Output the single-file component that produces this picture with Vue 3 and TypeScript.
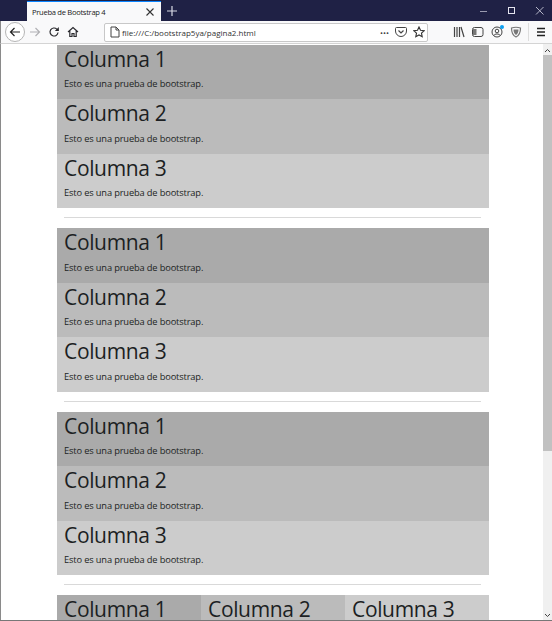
<script setup lang="ts">
interface Block {
  id: number
  layout: 'stack' | 'row'
}

const blocks: Block[] = [
  { id: 1, layout: 'stack' },
  { id: 2, layout: 'stack' },
  { id: 3, layout: 'stack' },
  { id: 4, layout: 'row' },
]
const columns = [1, 2, 3]
</script>

<template>
  <div class="window">
    <div class="tabbar">
      <div class="tab">
        <span class="tab-title">Prueba de Bootstrap 4</span>
        <svg class="tab-close" width="10" height="10" viewBox="0 0 10 10">
          <path d="M1.5 1.5l7 7M8.5 1.5l-7 7" stroke="#333" stroke-width="1.1" fill="none" />
        </svg>
      </div>
      <svg class="new-tab" width="12" height="12" viewBox="0 0 12 12">
        <path d="M6 1v10M1 6h10" stroke="#d8d9e4" stroke-width="1.2" fill="none" />
      </svg>
      <div class="win-controls">
        <svg width="10" height="10" viewBox="0 0 10 10"><path d="M1 5.5h7" stroke="#9a9bb0" fill="none" /></svg>
        <svg width="10" height="10" viewBox="0 0 10 10"><rect x="1.5" y="1.5" width="6" height="6" stroke="#e4e4ee" fill="none" /></svg>
        <svg width="10" height="10" viewBox="0 0 10 10"><path d="M1 1l7.5 7.5M8.500 1L1 8.500" stroke="#b5b6c8" fill="none" /></svg>
      </div>
    </div>

    <div class="navbar">
      <div class="back">
        <svg width="12" height="12" viewBox="0 0 12 12">
          <path d="M11 6H1.500M5.500 2L1.500 6l4 4" stroke="#222" stroke-width="1.200" fill="none" />
        </svg>
      </div>
      <svg class="nav-icon" width="12" height="12" viewBox="0 0 12 12">
        <path d="M11 6H1.500M5.500 2L1.500 6l4 4" transform="matrix(-1 0 0 1 12 0)" stroke="#b0b0b4" stroke-width="1.200" fill="none" />
      </svg>
      <svg class="nav-icon" width="12" height="12" viewBox="0 0 12 12">
        <path d="M10 6.500a4 4 0 1 1-1.200-3.400L10.500 4.500" stroke="#2a2a2e" stroke-width="1.200" fill="none" />
        <path d="M10.800 1v4h-4z" fill="#2a2a2e" />
      </svg>
      <svg class="nav-icon" width="12" height="12" viewBox="0 0 12 12">
        <path d="M1 6l5-4.500L11 6M2.800 5v5.500h2.200V7.500h2v3h2.200V5" stroke="#2a2a2e" stroke-width="1.200" fill="none" />
      </svg>

      <div class="urlbar">
        <svg class="doc" width="10" height="12" viewBox="0 0 10 12">
          <path d="M1 1h5l3 3v7H1zM6 1v3h3" stroke="#444" fill="none" />
        </svg>
        <span class="url">file:///C:/bootstrap5ya/pagina2.html</span>
        <span class="dots">•••</span>
        <svg class="pocket" width="12" height="12" viewBox="0 0 12 12">
          <path d="M1.500 1.500h9a1 1 0 0 1 1 1V5a5.500 5.500 0 0 1-11 0V2.500a1 1 0 0 1 1-1z" stroke="#444" fill="none" />
          <path d="M3.500 4.500L6 7l2.500-2.500" stroke="#444" stroke-width="1.200" fill="none" />
        </svg>
        <svg width="12" height="12" viewBox="0 0 12 12">
          <path d="M6 1l1.500 3.300 3.700.4-2.700 2.500.7 3.600L6 9l-3.200 1.800.7-3.600L.8 4.700l3.700-.4z" stroke="#333" stroke-width="1.100" fill="none" />
        </svg>
      </div>

      <div class="tools">
        <svg class="library" width="14" height="12" viewBox="0 0 14 12">
          <path d="M1.500 1v10M4 1v10M6.500 1v10M8 1l3 10" stroke="#444" stroke-width="1.200" fill="none" />
        </svg>
        <svg width="12" height="12" viewBox="0 0 12 12">
          <rect x=".5" y="1.500" width="10.500" height="9" rx="2" stroke="#444" fill="none" />
          <path d="M1 3h3.500v6H1z" fill="#777" />
        </svg>
        <span class="account">
          <svg width="12" height="12" viewBox="0 0 12 12">
            <circle cx="6" cy="6" r="5" stroke="#444" fill="none" />
            <circle cx="6" cy="5" r="1.800" stroke="#444" fill="none" />
            <path d="M2.800 9.500c1-2 5.400-2 6.400 0" stroke="#444" fill="none" />
          </svg>
          <i class="badge"></i>
        </span>
        <svg width="12" height="12" viewBox="0 0 12 12">
          <path d="M1.500 2c3-1 6-1 9 0 0 4-1 7.500-4.500 9C2.500 9.500 1.500 6 1.500 2z" stroke="#777" stroke-width="1.200" fill="none" />
          <path d="M3.500 3.500h5c0 2.500-.8 4.500-2.500 5.500-1.700-1-2.500-3-2.500-5.500z" fill="#777" />
        </svg>
        <i class="divider"></i>
        <svg class="menu" width="8" height="12" viewBox="0 0 8 12">
          <path d="M0 2.500h8M0 6h8M0 9.500h8" stroke="#222" stroke-width="1.300" fill="none" />
        </svg>
      </div>
    </div>

    <div class="viewport">
      <main class="page">
        <template v-for="(block, i) in blocks" :key="block.id">
          <hr v-if="i > 0" />
          <section class="block" :class="block.layout">
            <div v-for="n in columns" :key="n" class="col" :class="`shade-${n}`">
              <h1>Columna {{ n }}</h1>
              <p v-if="block.layout === 'stack'">Esto es una prueba de bootstrap.</p>
            </div>
          </section>
        </template>
      </main>
      <div class="scrollbar">
        <svg width="7" height="5" viewBox="0 0 7 5"><path d="M1 4l2.500-2.500L6 4" stroke="#444" fill="none" /></svg>
        <div class="thumb"></div>
        <svg width="7" height="5" viewBox="0 0 7 5"><path d="M1 1l2.500 2.500L6 1" stroke="#444" fill="none" /></svg>
      </div>
    </div>
  </div>
</template>

<style>
html,
body {
  margin: 0;
  overflow: hidden;
}
</style>

<style scoped>
.window {
  width: 552px;
  height: 621px;
  box-sizing: border-box;
  display: flex;
  flex-direction: column;
  overflow: hidden;
  background: #fff;
  border-bottom: 1px solid #777;
  font-family: "Open Sans", "Liberation Sans", sans-serif;
  color: #1c1f23;
}

.tabbar {
  height: 21px;
  flex: none;
  display: flex;
  align-items: center;
  padding-left: 27px;
  background: #1f2145;
}

.tab {
  width: 134px;
  height: 20px;
  margin-top: 1px;
  padding: 0 6px 0 5px;
  box-sizing: border-box;
  display: flex;
  align-items: center;
  justify-content: space-between;
  background: #f9f9fa;
  border-top: 1px solid #0a84ff;
}

.tab-title {
  font-size: 7.600px;
  letter-spacing: -0.3px;
  color: #222;
}

.new-tab {
  margin-left: 5px;
}

.win-controls {
  margin-left: auto;
  width: 73px;
  padding-right: 7px;
  box-sizing: border-box;
  display: flex;
  justify-content: space-between;
}

.navbar {
  height: 23px;
  flex: none;
  display: flex;
  align-items: center;
  padding-left: 4px;
  box-sizing: border-box;
  background: #f9f9fa;
  border-left: 1px solid #8a8a8a;
  border-bottom: 1px solid #d4d4d4;
}

.back {
  width: 20px;
  height: 20px;
  box-sizing: border-box;
  display: flex;
  align-items: center;
  justify-content: center;
  border: 1px solid #b5b5b5;
  border-radius: 50%;
  background: #fff;
  margin-right: 4px;
}

.nav-icon {
  margin-right: 7px;
}

.urlbar {
  width: 324px;
  height: 19px;
  margin-left: 18px;
  padding: 0 2px 0 5px;
  box-sizing: border-box;
  display: flex;
  align-items: center;
  background: #fff;
  border: 1px solid #c8c8c8;
  border-radius: 2px;
}

.doc {
  margin-right: 2px;
}

.url {
  flex: 1;
  font-size: 8px;
  color: #333;
}

.dots {
  margin-right: 6px;
  font-size: 8px;
  color: #444;
}

.pocket {
  margin-right: 6px;
}

.tools {
  display: flex;
  align-items: center;
  gap: 7px;
  margin-left: 25px;
}

.library {
  margin-right: -2px;
}

.account {
  position: relative;
  display: flex;
}

.badge {
  position: absolute;
  top: -1px;
  right: -1px;
  width: 4px;
  height: 4px;
  border-radius: 50%;
  background: #0a9ff0;
}

.divider {
  width: 1px;
  height: 18px;
  margin-left: -1px;
  background: #ddd;
}

.menu {
  margin-left: 1px;
}

.viewport {
  flex: 1;
  min-height: 0;
  display: flex;
  border-left: 1px solid #8a8a8a;
}

.page {
  flex: 1;
  min-width: 0;
  padding: 0.6px 0 0 56px;
  overflow: hidden;
}

.block {
  width: 432px;
}

.block.row {
  display: flex;
}

.block.row .col {
  flex: 1;
}

.col {
  height: 54.500px;
  padding: 0 7px;
  box-sizing: border-box;
  overflow: hidden;
}

.shade-1 {
  background: #aaa;
}

.shade-2 {
  background: #bbb;
}

.shade-3 {
  background: #ccc;
}

h1 {
  margin: 0;
  font-size: 21px;
  line-height: 28px;
  font-weight: 400;
  letter-spacing: -0.35px;
}

p {
  margin: 4.500px 0 0;
  font-size: 9.300px;
  line-height: 14px;
  letter-spacing: -0.15px;
}

hr {
  width: 417px;
  margin: 9px 0 10px 7px;
  height: 1px;
  border: 0;
  background: #d9d9d9;
}

.scrollbar {
  width: 9px;
  flex: none;
  display: flex;
  flex-direction: column;
  align-items: center;
  background: #f0f0f0;
  padding: 4px 0 2px;
  box-sizing: border-box;
}

.thumb {
  align-self: stretch;
  height: 396px;
  margin: 2px 0 auto;
  background: #c1c1c1;
}
</style>
